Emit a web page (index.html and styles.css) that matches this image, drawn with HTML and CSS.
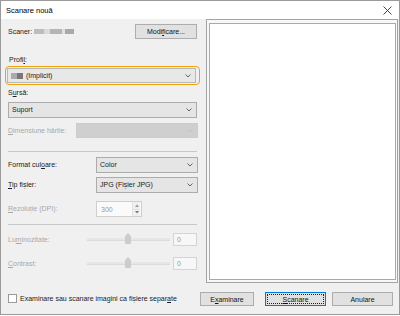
FILE: index.html
```html
<!DOCTYPE html>
<html lang="ro">
<head>
<meta charset="utf-8">
<title>Scanare nouă</title>
<link rel="stylesheet" href="styles.css">
</head>
<body>
<div class="window">
  <div class="titlebar">
    <span class="title">Scanare nouă</span>
    <svg class="close" width="9" height="9" viewBox="0 0 9 9"><path d="M0.5 0.5L8.5 8.5M8.5 0.5L0.5 8.5" stroke="#333" stroke-width="0.9" fill="none"/></svg>
  </div>
  <div class="main">
    <div class="left">
      <div class="scanner-row">
        <span class="text">Scaner:</span>
        <span class="blur-name"></span>
        <span class="btn modify">Modi<u>f</u>icare...</span>
      </div>
      <div class="label profile-label">Profi<u>l</u>:</div>
      <div class="focus-ring">
        <div class="combo">
          <span class="blur-small"></span><span class="ctext">(Implicit)</span>
          <svg class="chev" width="6" height="4" viewBox="0 0 6 4"><path d="M0.5 0.5L3 3L5.5 0.5" stroke="#444" stroke-width="0.8" fill="none"/></svg>
        </div>
      </div>
      <div class="label source-label">S<u>u</u>rsă:</div>
      <div class="combo source-combo">
        <span class="ctext">Suport</span>
        <svg class="chev" width="6" height="4" viewBox="0 0 6 4"><path d="M0.5 0.5L3 3L5.5 0.5" stroke="#444" stroke-width="0.8" fill="none"/></svg>
      </div>
      <div class="field-row paper-row">
        <span class="text disabled"><u>D</u>imensiune hârtie:</span>
        <div class="combo disabled paper-combo">
          <svg class="chev" width="6" height="4" viewBox="0 0 6 4"><path d="M0.5 0.5L3 3L5.5 0.5" stroke="#bbb" stroke-width="0.8" fill="none"/></svg>
        </div>
      </div>
      <div class="sep sep1"></div>
      <div class="field-row color-row">
        <span class="text">Format cul<u>o</u>are:</span>
        <div class="combo short">
          <span class="ctext">Color</span>
          <svg class="chev" width="6" height="4" viewBox="0 0 6 4"><path d="M0.5 0.5L3 3L5.5 0.5" stroke="#444" stroke-width="0.8" fill="none"/></svg>
        </div>
      </div>
      <div class="field-row type-row">
        <span class="text"><u>T</u>ip fișier:</span>
        <div class="combo short">
          <span class="ctext">JPG (Fișier JPG)</span>
          <svg class="chev" width="6" height="4" viewBox="0 0 6 4"><path d="M0.5 0.5L3 3L5.5 0.5" stroke="#444" stroke-width="0.8" fill="none"/></svg>
        </div>
      </div>
      <div class="field-row res-row">
        <span class="text disabled"><u>R</u>ezoluție (DPI):</span>
        <div class="spin">
          <span class="spin-val">300</span>
          <span class="spin-btns">
            <span class="spin-b"><svg width="4" height="3" viewBox="0 0 4 3"><path d="M0 3L2 0.5L4 3Z" fill="#999"/></svg></span>
            <span class="spin-b"><svg width="4" height="3" viewBox="0 0 4 3"><path d="M0 0L2 2.5L4 0Z" fill="#777"/></svg></span>
          </span>
        </div>
      </div>
      <div class="sep sep2"></div>
      <div class="slider-row bright-row">
        <span class="text disabled slabel">Lu<u>m</u>inozitate:</span>
        <div class="track"><span class="thumb"></span></div>
        <span class="valbox">0</span>
      </div>
      <div class="slider-row contrast-row">
        <span class="text disabled slabel"><u>C</u>ontrast:</span>
        <div class="track"><span class="thumb"></span></div>
        <span class="valbox">0</span>
      </div>
    </div>
    <div class="preview"><div class="preview-inner"></div></div>
  </div>
  <div class="footer">
    <label class="check"><span class="box"></span><span class="text">Examinare sau scanare imagini ca fișiere separ<u>a</u>te</span></label>
    <div class="buttons">
      <span class="btn fbtn exam">E<u>x</u>aminare</span>
      <span class="btn fbtn default"><span class="focus-in"><u>S</u>canare</span></span>
      <span class="btn fbtn cancel">Anulare</span>
    </div>
  </div>
</div>
</body>
</html>
```

FILE: styles.css
```css
* { box-sizing: border-box; }
html, body { margin: 0; padding: 0; background: #fff; }
body {
  font-family: "Liberation Sans", Arial, sans-serif;
  font-size: 7px;
  color: #1a1a1a;
}
u { text-decoration: underline; text-underline-offset: 1px; }
.window {
  width: 400px;
  height: 315px;
  border: 1px solid #9a9a9a;
  background: #f0f0f0;
  display: flex;
  flex-direction: column;
}
.titlebar {
  height: 18px;
  background: #fff;
  display: flex;
  align-items: center;
  justify-content: space-between;
  padding: 0 7px 0 5px;
  flex: none;
}
.title { font-size: 7.5px; color: #000; }
.close { display: block; }
.main {
  display: flex;
  height: 264px;
  flex: none;
}
.left {
  width: 197px;
  padding-left: 7px;
  display: flex;
  flex-direction: column;
  flex: none;
}
.text { line-height: 10px; white-space: nowrap; }
.disabled { color: #a8a8a8; }
.scanner-row {
  margin-top: 5px;
  height: 15px;
  display: flex;
  align-items: center;
}
.blur-name {
  width: 40px;
  height: 5px;
  margin-left: 2px;
  background: linear-gradient(90deg, #bdbdbd 0 25%, #d9d9d9 25% 40%, #b5b5b5 40% 70%, #e0e0e0 70% 78%, #a9a9a9 78%);
  filter: blur(0.6px);
}
.btn {
  display: flex;
  align-items: center;
  justify-content: center;
  background: #e1e1e1;
  border: 1px solid #adadad;
  color: #111;
  white-space: nowrap;
}
.modify {
  margin-left: auto;
  margin-right: 1px;
  width: 62px;
  height: 15px;
}
.label { line-height: 10px; }
.profile-label { margin-top: 16px; padding-left: 1px; }
.focus-ring {
  margin-top: 1px;
  margin-left: -3px;
  width: 195px;
  height: 19px;
  border: 1.5px solid #f0a30a;
  border-radius: 4px;
  padding: 0.5px 1px;
  display: flex;
  align-items: center;
}
.combo {
  position: relative;
  display: flex;
  align-items: center;
  width: 189px;
  height: 16px;
  background: #e5e5e5;
  border: 1px solid #acacac;
  padding-left: 3px;
}
.focus-ring .combo { border-color: #b8b8b8; background: #e8e8e8; height: 15px; }
.ctext { white-space: nowrap; line-height: 10px; }
.chev {
  position: absolute;
  right: 4px;
  top: 50%;
  margin-top: -2px;
  display: block;
}
.blur-small {
  width: 12px;
  height: 6px;
  margin-right: 3px;
  background: linear-gradient(90deg, #aaa 0 50%, #777 50%);
  filter: blur(0.7px);
}
.source-label { margin-top: 3px; }
.source-combo { margin-top: 4px; }
.field-row {
  display: flex;
  align-items: center;
}
.paper-row { margin-top: 5px; height: 15px; }
.paper-combo {
  margin-left: auto;
  width: 122px;
  height: 15px;
  background: #cfcfcf;
  border-color: #cccccc;
}
.sep {
  width: 189px;
  height: 1px;
  background: #c8c8c8;
  flex: none;
}
.sep1 { margin-top: 13px; }
.sep2 { margin-top: 7px; }
.color-row { margin-top: 5px; height: 16px; }
.type-row { margin-top: 4px; height: 16px; }
.short {
  margin-left: auto;
  width: 102px;
  height: 16px;
}
.res-row { margin-top: 8px; height: 16px; }
.spin {
  width: 46px;
  height: 16px;
  background: #fafafa;
  border: 1px solid #cfcfcf;
  display: flex;
  align-items: center;
}
.res-row .text { width: 88px; }
.spin-val { color: #9a9a9a; padding-left: 4px; flex: 1; }
.spin-btns {
  width: 8px;
  height: 14px;
  display: flex;
  flex-direction: column;
  border-left: 1px solid #e3e3e3;
  margin-right: 1px;
}
.spin-b {
  flex: 1;
  display: flex;
  align-items: center;
  justify-content: center;
  background: #f0f0f0;
}
.spin-b + .spin-b { border-top: 1px solid #e3e3e3; }
.spin-b svg { display: block; }
.slider-row {
  display: flex;
  align-items: center;
  height: 13px;
}
.bright-row { margin-top: 8px; }
.contrast-row { margin-top: 11px; }
.slabel { width: 79px; }
.track {
  position: relative;
  width: 83px;
  height: 3px;
  background: #e6e6e6;
  border: 1px solid #dcdcdc;
  border-width: 0 0 1px 0;
}
.thumb {
  position: absolute;
  left: 38px;
  top: -5px;
  width: 6px;
  height: 11px;
  background: #cccccc;
  clip-path: polygon(0 30%, 50% 0, 100% 30%, 100% 100%, 0 100%);
}
.valbox {
  margin-left: 3px;
  width: 24px;
  height: 13px;
  border: 1px solid #d4d4d4;
  background: #f7f7f7;
  color: #9a9a9a;
  padding-left: 3px;
  line-height: 11px;
}
.preview {
  margin-top: 0;
  margin-left: 8px;
  width: 192px;
  height: 264px;
  border: 1px solid #a3a3a3;
  background: #f8f8f8;
  padding: 2.5px 1.5px;
  flex: none;
}
.preview-inner {
  width: 100%;
  height: 100%;
  border: 1px solid #a9a9a9;
  background: #fff;
}
.footer {
  display: flex;
  align-items: flex-start;
  padding-top: 9px;
}
.check {
  display: flex;
  align-items: center;
  margin-left: 7px;
  margin-top: 1px;
  height: 11px;
}
.box {
  width: 9px;
  height: 9px;
  background: #fff;
  border: 1px solid #9a9a9a;
  margin-right: 3px;
}
.buttons {
  margin-left: auto;
  margin-right: 6px;
  display: flex;
}
.fbtn { height: 14px; }
.exam { width: 54px; margin-right: 11px; }
.fbtn.default {
  width: 61px;
  margin-right: 6px;
  border-color: #0078d7;
  padding: 1px;
}
.cancel { width: 61px; }
.focus-in {
  width: 100%;
  height: 100%;
  display: flex;
  align-items: center;
  justify-content: center;
  border: 1px dotted #222;
}
```
